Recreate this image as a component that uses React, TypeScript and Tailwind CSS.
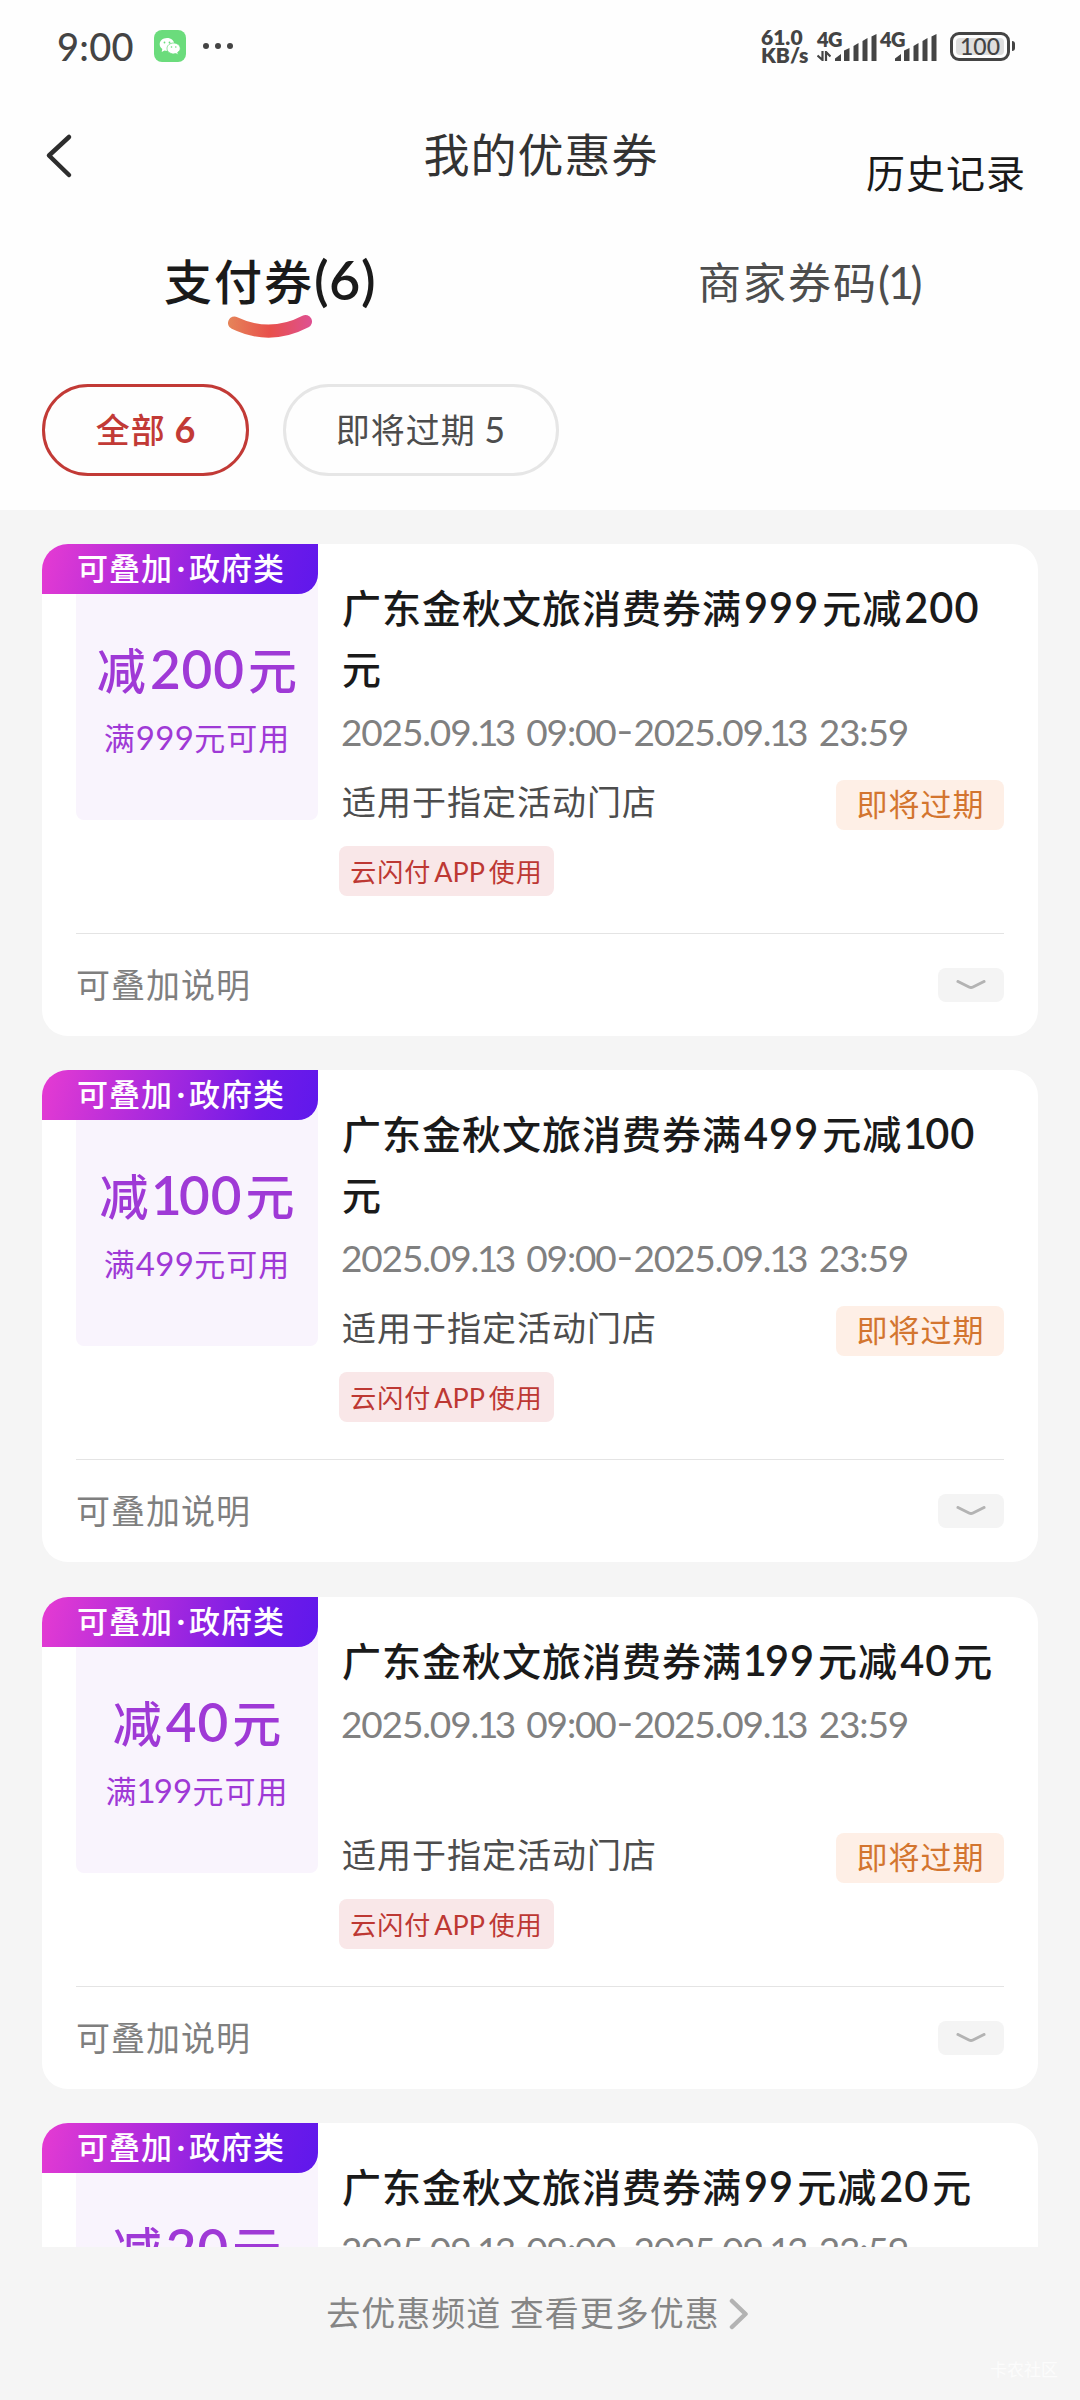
import { Fragment } from "react";

type Coupon = { amount: string; limit: string; title: string };

const coupons: Coupon[] = [
  { amount: "减200元", limit: "满999元可用", title: "广东金秋文旅消费券满999元减200元" },
  { amount: "减100元", limit: "满499元可用", title: "广东金秋文旅消费券满499元减100元" },
  { amount: "减40元", limit: "满199元可用", title: "广东金秋文旅消费券满199元减40元" },
  { amount: "减20元", limit: "满99元可用", title: "广东金秋文旅消费券满99元减20元" },
];

/* Sets Latin runs in Lato and tightens the digit 1, which is tabular in that face. */
function Latin({ text, className = "" }: { text: string; className?: string }) {
  return (
    <span className={"whitespace-pre font-['Lato'] leading-none " + className}>
      {text.split("1").map((part, i) => (
        <Fragment key={i}>
          {i > 0 && <span className="-ml-[0.03em] -mr-[0.07em]">1</span>}
          {part}
        </Fragment>
      ))}
    </span>
  );
}

function Mixed({ text, latin }: { text: string; latin: string }) {
  return (
    <>
      {text.split(/([0-9A-Za-z()]+)/).map((part, i) =>
        i % 2 ? <Latin key={i} text={part} className={latin} /> : <Fragment key={i}>{part}</Fragment>,
      )}
    </>
  );
}

function Signal() {
  return (
    <svg className="h-[27px] w-[42px]" viewBox="0 0 42 27" fill="#444">
      <path d="M0 27V24.500L6 20V27ZM9 27V16.500L14.500 14V27ZM18.500 27V12L23.500 9V27ZM27.500 27V7L32.500 4V27ZM36.500 27V2.500L41.500 0V27Z" />
    </svg>
  );
}

function StatusBar() {
  return (
    <div className="flex h-[92px] items-center pl-[57px] pr-[65px] text-[#444]">
      <span className="w-[76px] font-['Lato'] text-[38px] font-medium leading-[40px] tracking-[0.3px]">9:00</span>
      <svg className="ml-[21px] size-8" viewBox="0 0 32 32">
        <rect width="32" height="32" rx="8" fill="#6bdc7c" />
        <path
          d="M13 8c-4.200 0-7.300 2.800-7.300 6.200 0 2 1 3.700 2.600 4.800L7.700 22l2.800-1.500c.8.200 1.600.3 2.500.3 4.200 0 7.300-2.900 7.300-6.500S17.200 8 13 8Z"
          fill="#fff"
        />
        <path
          d="M19.600 13c-3.700 0-6.600 2.400-6.600 5.400s2.900 5.500 6.600 5.500c.8 0 1.500-.1 2.200-.3l2.400 1.200-.5-2.500c1.500-1 2.500-2.300 2.500-3.900 0-3-2.900-5.400-6.600-5.400Z"
          fill="#fff"
          stroke="#6bdc7c"
          strokeWidth="0.800"
        />
        <g fill="#6bdc7c">
          <circle cx="10.500" cy="12.500" r="0.900" />
          <circle cx="15.500" cy="12.500" r="0.900" />
          <circle cx="17.500" cy="17" r="0.800" />
          <circle cx="21.800" cy="17" r="0.800" />
        </g>
      </svg>
      <div className="ml-[17px] flex gap-[6px]">
        <i className="size-[6px] rounded-full bg-[#444]" />
        <i className="size-[6px] rounded-full bg-[#444]" />
        <i className="size-[6px] rounded-full bg-[#444]" />
      </div>
      <div className="ml-auto flex items-center">
        <div className="w-[56px] font-['Lato'] text-[21px] font-extrabold leading-[18px]">
          <div>61.0</div>
          <div>KB/s</div>
        </div>
        <div className="flex h-[30px] w-[60px]">
          <div className="w-[18px]">
            <div className="w-[27px] font-['Lato'] text-[20px] font-extrabold leading-[16px] tracking-[-0.5px]">4G</div>
            <svg className="mt-[4px] h-[10px] w-[14px]" viewBox="0 0 14 10" fill="none" stroke="#444" strokeWidth="2.200">
              <path d="M5.500 0V9L0.500 4.500M9 10V1L13.500 5.500" />
            </svg>
          </div>
          <div className="mt-[3px]">
            <Signal />
          </div>
        </div>
        <div className="ml-[3px] flex h-[30px] w-[57px]">
          <div className="w-[18px] font-['Lato'] text-[20px] font-extrabold leading-[16px] tracking-[-0.5px]">4G</div>
          <div className="-ml-[3px] mt-[3px]">
            <Signal />
          </div>
        </div>
        <div className="ml-[13px] flex h-[29px] w-[60px] items-center justify-center rounded-[9px] border-[3px] border-[#444] p-[3px]">
          <div className="flex h-full w-full items-center justify-center rounded-[4px] bg-[#dedede] font-['Lato'] text-[23px] font-medium leading-none">
            100
          </div>
        </div>
        <i className="ml-[2px] h-[10px] w-[3px] rounded-r-full bg-[#444]" />
      </div>
    </div>
  );
}

function CouponCard({ coupon }: { coupon: Coupon }) {
  return (
    <article className="relative h-[492px] shrink-0 rounded-[26px] bg-white px-[34px]">
      <div className="absolute left-0 top-0 flex h-[50px] w-[276px] rounded-br-[20px] rounded-tl-[26px] bg-[linear-gradient(105deg,#e63bd2_0%,#a027df_48%,#6f1ae8_80%,#5f18ec_100%)] pl-[35px] text-[31px] font-medium leading-[46px] tracking-[1px] text-white">
        可叠加<span className="w-4 text-center font-['Lato'] font-semibold tracking-normal">·</span>政府类
      </div>
      <div className="flex h-[390px] border-b border-[#e4e4e4]">
        <div className="mt-[33px] h-[243px] w-[242px] shrink-0 rounded-[8px] bg-[#f9f4fd] pt-[61px] text-center text-[#9f39d6]">
          <div className="text-[49px] font-medium leading-[60px]">
            <Mixed text={coupon.amount} latin="ml-[4px] mr-[3px] text-[53px] font-semibold tracking-[1px]" />
          </div>
          <div className="mt-[19px] text-[31px] leading-[40px] tracking-[1px]">
            <Mixed text={coupon.limit} latin="text-[33px] tracking-[0.300px]" />
          </div>
        </div>
        <div className="ml-6 flex-1 pt-8">
          <div className="h-[204px]">
            <h2 className="-mr-[20px] w-[660px] text-[39px] font-medium leading-[60.500px] tracking-[1px] text-[#1a1a1a]">
              <Mixed text={coupon.title} latin="ml-[2px] mr-[3px] text-[41.500px] font-semibold tracking-[1px]" />
            </h2>
            <div className="-ml-px mt-[9px] whitespace-nowrap text-[37px] leading-[48px] text-[#808080] [word-spacing:3px]">
              <Latin text="2025.09.13 09:00" className="tracking-[-1.150px]" />
              <span className="mx-[2px] inline-block -translate-y-[2px] scale-x-125 font-['Lato'] leading-none">-</span>
              <Latin text="2025.09.13 23:59" className="tracking-[-1.150px]" />
            </div>
          </div>
          <div className="flex h-[50px] justify-between">
            <div className="pt-px text-[34px] leading-[40px] tracking-[1px] text-[#4d4d4d]">适用于指定活动门店</div>
            <div className="w-[168px] rounded-[8px] bg-[#feefe6] pl-px text-center text-[31px] leading-[46px] tracking-[1px] text-[#d3752f]">
              即将过期
            </div>
          </div>
          <div className="-ml-[3px] mt-4 h-[50px] w-[215px] rounded-[8px] bg-[#f9e7e8] text-center text-[26px] leading-[50px] tracking-[1px] text-[#bd3833]">
            <Mixed text="云闪付APP使用" latin="ml-[3px] mr-[4px] text-[27px] tracking-normal" />
          </div>
        </div>
      </div>
      <div className="flex h-[102px] items-center justify-between">
        <span className="-mt-[2px] text-[34px] leading-[40px] tracking-[1px] text-[#7f7f7f]">可叠加说明</span>
        <div className="flex h-[34px] w-[66px] items-center justify-center rounded-[8px] bg-[#f4f4f4]">
          <svg className="h-[10px] w-[30px]" viewBox="0 0 30 10" fill="none" stroke="#b3b3b3" strokeWidth="3" strokeLinecap="round">
            <path d="M2 1.500L13 7Q15 8 17 7L28 1.500" />
          </svg>
        </div>
      </div>
    </article>
  );
}

export default function App() {
  return (
    <div className="flex h-[2400px] w-[1080px] flex-col overflow-hidden bg-[#f5f5f5] font-['Noto_Sans_CJK_SC',sans-serif]">
      <header className="h-[510px] shrink-0 bg-[#fefefe]">
        <StatusBar />
        <div className="grid h-[126px] grid-cols-[1fr_auto_1fr]">
          <svg className="ml-[44px] mt-[40px] h-[48px] w-[30px]" viewBox="0 0 30 48" fill="none" stroke="#2d2d2d" strokeWidth="4.500" strokeLinecap="round" strokeLinejoin="round">
            <path d="M25 5L5 23.500L25 43" />
          </svg>
          <h1 className="ml-[2px] mt-[30px] text-[46px] leading-[60px] tracking-[1px] text-[#333]">我的优惠券</h1>
          <div className="mt-[49px] pr-[54px] text-right text-[39px] leading-[60px] tracking-[1px] text-[#1a1a1a]">历史记录</div>
        </div>
        <nav className="grid h-[166px] grid-cols-2 text-center">
          <div className="relative pt-[31px] text-[48px] font-medium leading-[60px] tracking-[2px] text-[#1a1a1a]">
            <Mixed text="支付券(6)" latin="text-[54px] font-semibold tracking-[0.500px]" />
            <svg className="absolute left-[226px] top-[94px] h-[30px] w-[88px]" viewBox="0 0 88 30" fill="none">
              <defs>
                <linearGradient id="smile" x1="0" y1="0" x2="88" y2="0" gradientUnits="userSpaceOnUse">
                  <stop offset="0" stopColor="#e5875a" />
                  <stop offset="0.500" stopColor="#e8504b" />
                  <stop offset="1" stopColor="#de5095" />
                </linearGradient>
              </defs>
              <path d="M8.500 11Q44 28 79.500 9.500" stroke="url(#smile)" strokeWidth="13" strokeLinecap="round" />
            </svg>
          </div>
          <div className="pt-8 text-[43px] leading-[60px] tracking-[2px] text-[#4d4d4d]">
            <Mixed text="商家券码(1)" latin="text-[45px] tracking-[-0.500px]" />
          </div>
        </nav>
        <div className="flex gap-[34px] pl-[42px] text-[34px] leading-[84px]">
          <div className="h-[92px] w-[207px] rounded-full border-3 border-[#c23a36] pl-[1px] text-center font-medium tracking-[1px] text-[#c23a36]">
            全部 <Latin text="6" className="text-[36px] font-bold" />
          </div>
          <div className="h-[92px] w-[276px] rounded-full border-3 border-[#e6e6e6] text-center tracking-[1px] text-[#4d4d4d]">
            即将过期 <Latin text="5" className="text-[36px]" />
          </div>
        </div>
      </header>
      <main className="flex h-[1737px] shrink-0 flex-col gap-[34.330px] overflow-hidden px-[42px] pt-[34px]">
        {coupons.map((coupon) => (
          <CouponCard key={coupon.title} coupon={coupon} />
        ))}
      </main>
      <footer className="relative flex flex-1 items-start justify-center pr-[5px] pt-[42px] text-[34px] leading-[46px] tracking-[1px] text-[#858585]">
        去优惠频道 查看更多优惠
        <svg className="ml-[9px] mt-[9px] h-[32px] w-[20px]" viewBox="0 0 20 32" fill="none" stroke="#b3b3b3" strokeWidth="4.500" strokeLinecap="round" strokeLinejoin="round">
          <path d="M3 3L16.500 16L3 29" />
        </svg>
        <span className="absolute bottom-[19px] right-[22px] text-[17px] leading-[24px] tracking-normal text-[#fcfcfc]">卡农社区</span>
      </footer>
    </div>
  );
}
